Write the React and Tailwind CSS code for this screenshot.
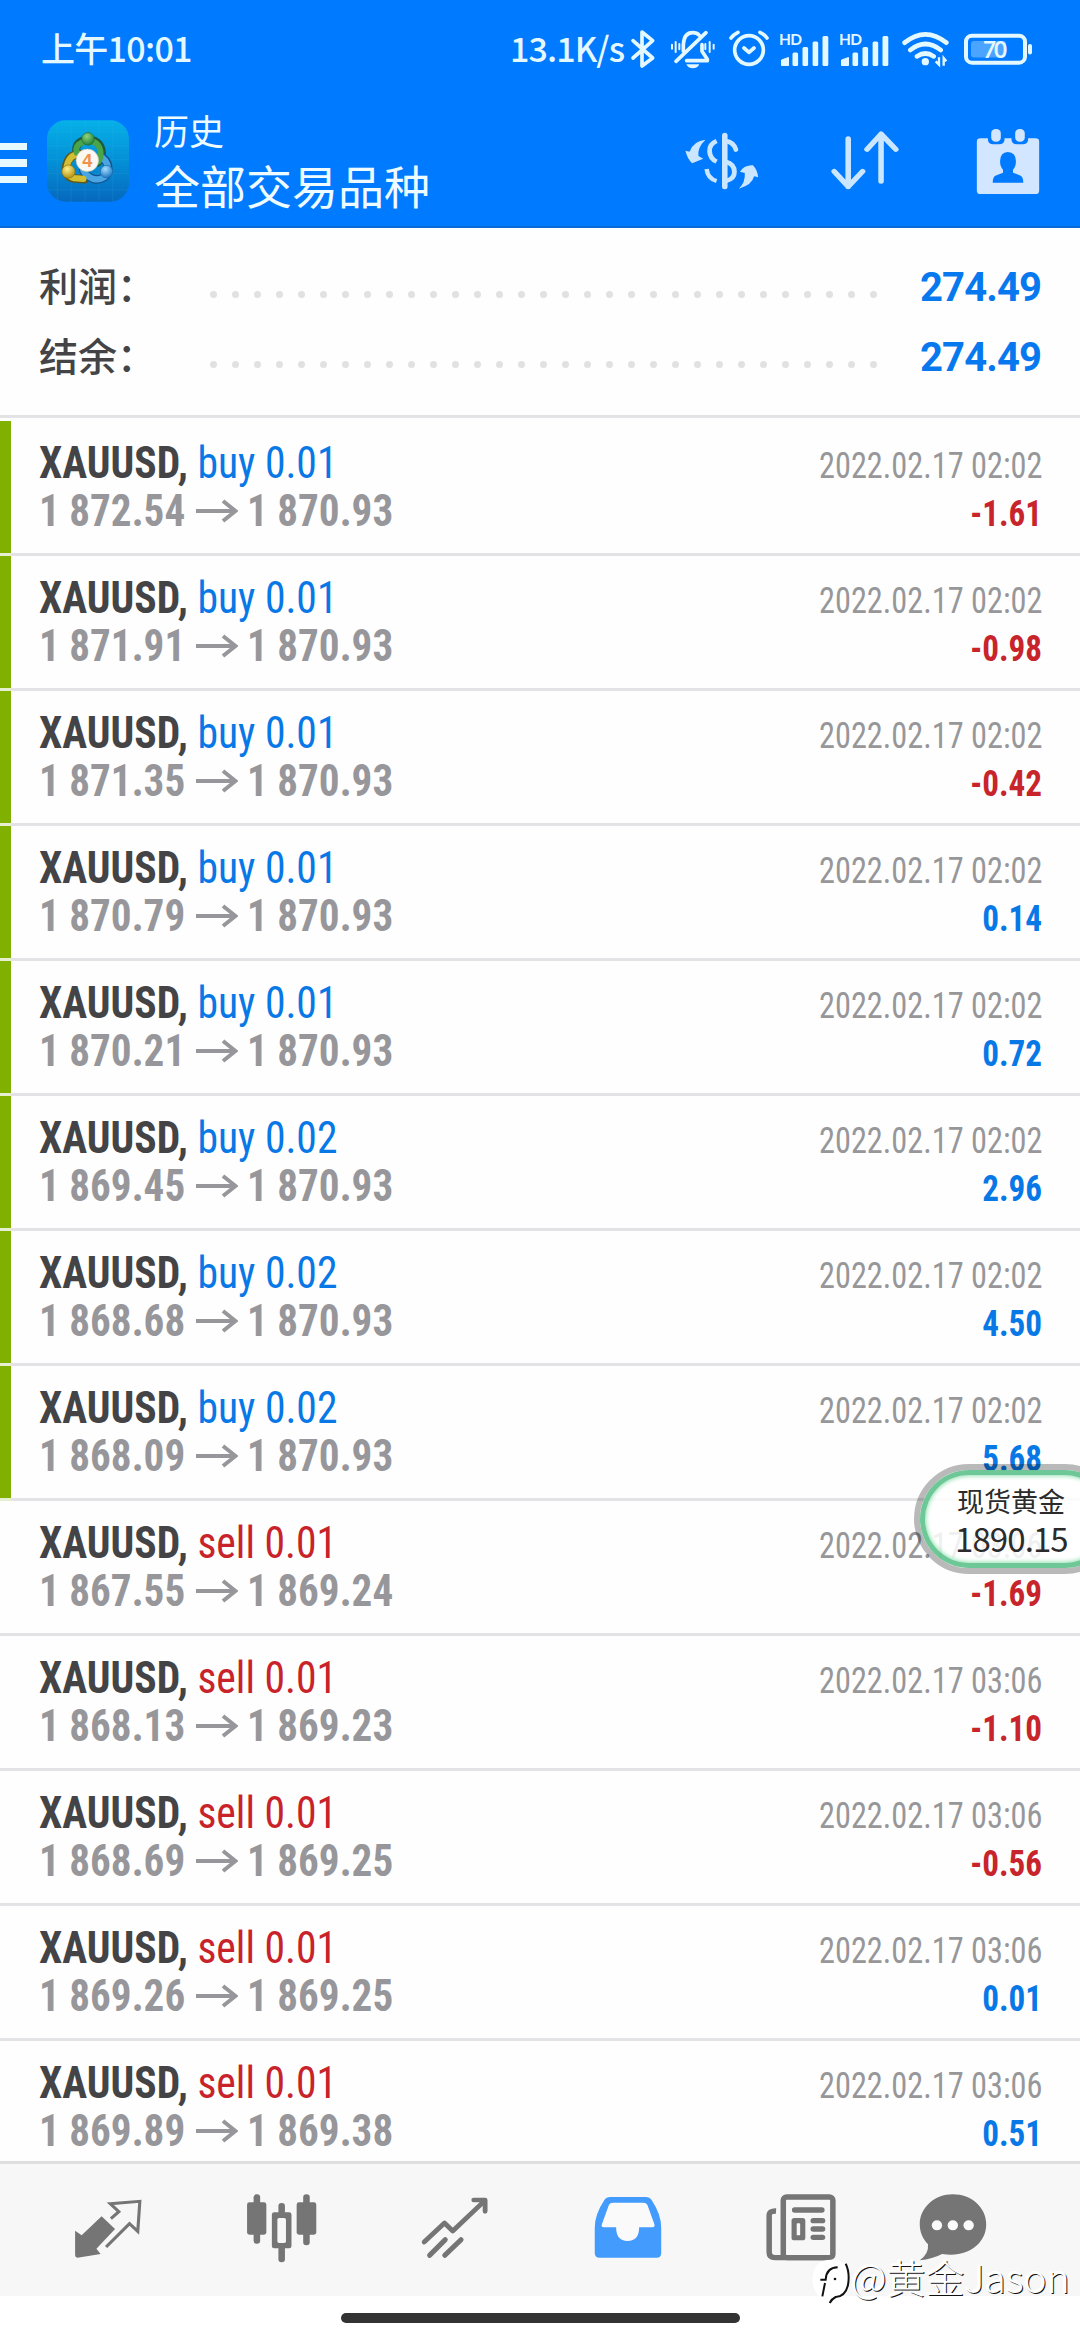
import React from "react";

const SUMMARY = [
  { label: "利润：", value: "274.49" },
  { label: "结余：", value: "274.49" },
];

const DEALS = [
  ["buy", "0.01", "1 872.54", "1 870.93", "2022.02.17 02:02", "-1.61"],
  ["buy", "0.01", "1 871.91", "1 870.93", "2022.02.17 02:02", "-0.98"],
  ["buy", "0.01", "1 871.35", "1 870.93", "2022.02.17 02:02", "-0.42"],
  ["buy", "0.01", "1 870.79", "1 870.93", "2022.02.17 02:02", "0.14"],
  ["buy", "0.01", "1 870.21", "1 870.93", "2022.02.17 02:02", "0.72"],
  ["buy", "0.02", "1 869.45", "1 870.93", "2022.02.17 02:02", "2.96"],
  ["buy", "0.02", "1 868.68", "1 870.93", "2022.02.17 02:02", "4.50"],
  ["buy", "0.02", "1 868.09", "1 870.93", "2022.02.17 02:02", "5.68"],
  ["sell", "0.01", "1 867.55", "1 869.24", "2022.02.17 03:06", "-1.69"],
  ["sell", "0.01", "1 868.13", "1 869.23", "2022.02.17 03:06", "-1.10"],
  ["sell", "0.01", "1 868.69", "1 869.25", "2022.02.17 03:06", "-0.56"],
  ["sell", "0.01", "1 869.26", "1 869.25", "2022.02.17 03:06", "0.01"],
  ["sell", "0.01", "1 869.89", "1 869.38", "2022.02.17 03:06", "0.51"],
];

function Signal({ className }) {
  return (
    <svg className={className} width="52" height="34" viewBox="0 0 52 34" fill="currentColor">
      <text x="0" y="13" fontSize="15.5" fontWeight="700" fontFamily="Lato, sans-serif" textLength="23">HD</text>
      <path d="M2.5 33.5 V28 L9.5 25.5 V33.5 Z" stroke="currentColor" strokeWidth="1" strokeLinejoin="round" />
      <rect x="13.5" y="20.5" width="5.6" height="13.5" rx="1.5" />
      <rect x="23.5" y="15" width="5.6" height="19" rx="1.5" />
      <rect x="33.6" y="9.5" width="5.6" height="24.5" rx="1.5" />
      <rect x="43.5" y="4" width="5.8" height="30" rx="1.5" />
    </svg>
  );
}

function StatusBar() {
  return (
    <div className="flex h-[97px] shrink-0 items-center pl-[41px] text-[#e4f8ff] font-['Noto_Sans_CJK_SC',sans-serif]">
      <span className="w-[469px] whitespace-nowrap pb-[2px] text-[34px] font-medium leading-none tracking-[-0.7px]">上午10:01</span>
      <span className="w-[120px] whitespace-nowrap pb-[2px] text-[34px] font-medium leading-none tracking-[-0.9px]">13.1K/s</span>
      {/* bluetooth */}
      <svg width="26" height="42" viewBox="30 20 78 126" fill="none" stroke="currentColor" strokeWidth="11" strokeLinejoin="round" strokeLinecap="round">
        <path d="M39 58 L98 110 L66 134 V32 L98 58 L39 110" />
      </svg>
      {/* muted bell */}
      <svg className="ml-[13px]" width="48" height="42" viewBox="147 22 144 126" fill="none" stroke="currentColor" strokeLinecap="round">
        <g strokeWidth="11" strokeLinejoin="round">
          <path d="M168 122 L258 36" />
          <path d="M190 92 V72 Q192 36 218 36 Q231 36 238 44" />
          <path d="M246 72 V92 L262 116 V120 H200" />
        </g>
        <g strokeWidth="6">
          <path d="M156 72 V84 M167 64 V94 M178 70 V86 M256 70 V86 M269 64 V94 M281 72 V84" />
        </g>
        <path d="M199 131 H238 Q233 143 218.500 143 Q204 143 199 131 Z" fill="currentColor" stroke="none" />
      </svg>
      {/* alarm */}
      <svg className="ml-[11px]" width="42" height="42" viewBox="326 22 126 126" fill="none" stroke="currentColor" strokeWidth="11" strokeLinecap="round" strokeLinejoin="round">
        <circle cx="389" cy="88" r="43" />
        <path d="M374 82 L389 95 L404 82 M335 52 Q342 42 356 35 M443 52 Q436 42 422 35" />
      </svg>
      <Signal className="ml-[9px]" />
      <Signal className="ml-[8px]" />
      {/* wifi */}
      <svg className="ml-[10px]" width="50" height="38" viewBox="214 30 150 114" fill="none" stroke="currentColor" strokeWidth="14" strokeLinecap="round">
        <path d="M225 68 Q287 18 350 68 M242 90 Q287 54 333 90 M262 109 Q287 92 312 109" />
        <circle cx="287" cy="125" r="11" fill="currentColor" stroke="none" />
        <path d="M318 124 L328 134 V112 M342 137 V114 L350 124" strokeWidth="7" strokeLinecap="butt" />
      </svg>
      {/* battery */}
      <svg className="ml-[12px]" width="72" height="34" viewBox="0 0 72 34">
        <rect x="3" y="3.700" width="59" height="27" rx="6" fill="none" stroke="currentColor" strokeWidth="4" />
        <rect x="8" y="9" width="35" height="16.500" rx="3" fill="#4ba4ff" />
        <rect x="65" y="12" width="4" height="10.500" rx="2" fill="currentColor" />
        <text x="32" y="25.500" textAnchor="middle" fontSize="22.500" fontWeight="700" fontFamily="Lato, sans-serif" fill="currentColor" textLength="24">70</text>
      </svg>
    </div>
  );
}

function AppLogo() {
  return (
    <svg className="ml-[20px] shrink-0" width="82" height="82" viewBox="22 28 248 246">
      <defs>
        <linearGradient id="tile" x1="0" y1="0" x2="0" y2="1">
          <stop offset="0" stopColor="#06b0e8" />
          <stop offset="0.5" stopColor="#0490d6" />
          <stop offset="1" stopColor="#0668bd" />
        </linearGradient>
        <radialGradient id="green" cx="0.4" cy="0.3" r="0.7">
          <stop offset="0" stopColor="#8fd47f" />
          <stop offset="1" stopColor="#23823a" />
        </radialGradient>
        <radialGradient id="gold" cx="0.4" cy="0.3" r="0.7">
          <stop offset="0" stopColor="#fff08a" />
          <stop offset="1" stopColor="#b39312" />
        </radialGradient>
        <radialGradient id="azure" cx="0.4" cy="0.3" r="0.7">
          <stop offset="0" stopColor="#a5dcff" />
          <stop offset="1" stopColor="#1c78c4" />
        </radialGradient>
      </defs>
      <rect x="22" y="28" width="248" height="246" rx="56" fill="url(#tile)" />
      <path d="M53 30 V272 M95 28 V274 M137 28 V274 M179 28 V274 M221 28 V274 M24 63 H268 M22 105 H270 M22 147 H270 M22 189 H270 M24 238 H268" stroke="#49c4f2" strokeWidth="1.500" opacity="0.25" />
      <g fill="none" strokeLinecap="round">
        <path d="M112 128 Q102 92 146 86 Q192 88 188 140 L176 156" stroke="#1c5c3c" strokeWidth="24" />
        <path d="M122 130 Q88 130 80 166 Q76 198 104 204 L136 206" stroke="#5c5a20" strokeWidth="26" />
        <path d="M188 140 Q212 156 206 186 Q194 210 164 206 Q140 198 132 180" stroke="#12538f" strokeWidth="26" />
        <path d="M132 180 Q140 198 164 206 Q194 210 206 186 Q210 158 190 142" stroke="#4aa6e2" strokeWidth="19" />
        <path d="M122 130 Q90 130 82 166 Q78 196 104 203 L132 205" stroke="#d2be30" strokeWidth="19" />
        <path d="M112 126 Q104 96 146 90 Q188 92 184 140 L178 152" stroke="#4aa54a" strokeWidth="18" />
      </g>
      <circle cx="146" cy="84" r="19" fill="url(#green)" stroke="#1c6b38" strokeWidth="2" />
      <circle cx="87" cy="183" r="20" fill="url(#gold)" stroke="#8a7a1a" strokeWidth="2" />
      <circle cx="202" cy="183" r="19" fill="url(#azure)" stroke="#1a66a8" strokeWidth="2" />
      <circle cx="144" cy="149" r="34" fill="#fbf8f4" stroke="#c9c5b0" strokeWidth="2" />
      <text x="144" y="168" textAnchor="middle" fontSize="55" fontWeight="700" fontFamily="'Liberation Sans', sans-serif" fill="#f0924a">4</text>
    </svg>
  );
}

function Header() {
  return (
    <div className="flex flex-1 items-center border-b-2 border-[#0a6ad6] pb-px">
      <div className="flex w-[27px] flex-col gap-[9px] pt-1">
        <div className="h-[7.500px] bg-[#e6f9ff]" />
        <div className="h-[7.500px] bg-[#e6f9ff]" />
        <div className="h-[7.500px] bg-[#e6f9ff]" />
      </div>
      <AppLogo />
      <div className="ml-[25px] flex w-[501px] flex-col whitespace-nowrap pb-[3px] text-[#eefbff]">
        <span className="text-[35px] leading-[49px]">历史</span>
        <span className="text-[46px] leading-[61px]">全部交易品种</span>
      </div>
      {/* currency exchange */}
      <svg className="ml-[29px]" width="76" height="62" viewBox="498 388 205 186" preserveAspectRatio="none" fill="none" stroke="#cbe6ff" strokeWidth="13">
        <path d="M608 404 V558" strokeWidth="15" strokeLinecap="round" />
        <path d="M586 421 Q566 430 567 452 Q568 474 586 483" />
        <path d="M610 421 Q632 424 638 447" strokeLinecap="round" />
        <path d="M610 483 Q634 490 634 514 Q634 534 612 541" />
        <path d="M559 505 Q562 534 586 541" strokeWidth="12" />
        <path d="M556 417 Q524 420 513 453 L502 450 Q506 472 520 488 L550 474 L537 466 Q534 440 556 417 Z" fill="#cbe6ff" stroke="none" />
        <path d="M646 564 Q664 545 662 517 L649 513 Q662 492 684 494 Q696 508 698 530 L687 527 Q682 553 646 564 Z" fill="#cbe6ff" stroke="none" />
      </svg>
      {/* sort */}
      <svg className="ml-[69px]" width="72" height="66" viewBox="890 388 195 198" preserveAspectRatio="none" fill="none" stroke="#cbe6ff" strokeWidth="15" strokeLinecap="round" strokeLinejoin="round">
        <path d="M942 420 V564 M904 518 L942 564 L981 518 M1031 548 V406 M993 452 L1031 406 L1071 452" />
      </svg>
      {/* calendar */}
      <svg className="ml-[74px]" width="66" height="68" viewBox="1284 380 179 204" preserveAspectRatio="none">
        <rect x="1289" y="414" width="169" height="167" rx="10" fill="#d2e6ff" />
        <path d="M1319 408 H1364 V420 Q1362 432 1350 432 H1333 Q1321 432 1319 420 Z M1383 408 H1428 V420 Q1426 432 1414 432 H1397 Q1385 432 1383 420 Z" fill="#007aff" />
        <rect x="1328" y="386" width="26" height="38" rx="12" fill="#d2e6ff" />
        <rect x="1393" y="386" width="26" height="38" rx="12" fill="#d2e6ff" />
        <path d="M1373 455 Q1395 457 1395 482 Q1395 500 1387 508 V517 L1408 526 Q1415 531 1415 547 H1332 Q1332 531 1339 526 L1360 517 V508 Q1352 500 1352 482 Q1352 457 1373 455 Z" fill="#007aff" />
      </svg>
    </div>
  );
}

function Summary() {
  return (
    <div className="flex h-[190px] shrink-0 flex-col border-b-[3px] border-[#e3e3e5] pt-[23px]">
      {SUMMARY.map((s) => (
        <div key={s.label} className="flex h-[70px] items-center pl-[39px] pr-[39px]">
          <span className="w-[171px] whitespace-nowrap pb-[4px] text-[39px] font-medium leading-none text-[#444446]">{s.label}</span>
          <div className="mt-[16px] flex w-[667px] justify-between">
            {Array.from({ length: 31 }, (_, i) => (
              <span key={i} className="size-[7px] rounded-full bg-[#e1e1e2]" />
            ))}
          </div>
          <span className="ml-auto pt-[3px] font-['Roboto'] text-[40px] font-bold leading-none tracking-[-0.9px] text-[#0878ee]">{s.value}</span>
        </div>
      ))}
    </div>
  );
}

function Deal({ deal }) {
  const [side, lots, open, close, time, profit] = deal;
  const isBuy = side === "buy";
  const isLoss = profit.startsWith("-");
  return (
    <div className="flex h-[135px] shrink-0 flex-col font-['Roboto_Condensed','Roboto',sans-serif]">
      <div className="flex h-[132px]">
        <div className={isBuy ? "w-[11px] bg-[#80b000]" : "w-[11px]"} />
        <div className="flex-1 pl-[28px] pr-[38px] pt-[18px]">
          <div className="flex h-[48px] items-baseline justify-between whitespace-nowrap text-[44px] leading-[48px]">
            <span className="origin-left scale-x-[0.945]">
              <b className="font-bold text-[#444446]">XAUUSD,</b>{" "}
              <span className={isBuy ? "text-[#0878e6]" : "text-[#c8232a]"}>{side} {lots}</span>
            </span>
            <span className="origin-right scale-x-[0.885] text-[36.500px] text-[#97979a]">{time}</span>
          </div>
          <div className="flex h-[48px] items-baseline whitespace-nowrap text-[44px] font-bold leading-[48px] text-[#97979b]">
            <span className="w-[157px]"><span className="inline-block origin-left scale-x-[0.935]">{open}</span></span>
            <svg className="w-[42px] self-center" height="24" viewBox="0 0 42 24" fill="none" stroke="currentColor" strokeWidth="4">
              <path d="M0 12 H39 M27 2 L39.500 12 L27 22" />
            </svg>
            <span className="ml-[9px] inline-block origin-left scale-x-[0.935]">{close}</span>
            <span className={isLoss ? "ml-auto origin-right scale-x-[0.92] text-[36px] text-[#c8242b]" : "ml-auto origin-right scale-x-[0.92] text-[36px] text-[#0878e6]"}>{profit}</span>
          </div>
        </div>
      </div>
      <div className="flex h-[3px] bg-[#e3e3e5]">
        {isBuy && <div className="w-[11px] bg-[#e6efcf]" />}
      </div>
    </div>
  );
}

function NavIcon({ x, w, className, children }) {
  return (
    <svg className={className} width={w / 2.904} height="71.7" viewBox={`${x} 155 ${w} 215`} preserveAspectRatio="none">
      {children}
    </svg>
  );
}

function BottomNav() {
  return (
    <div className="flex h-[135px] shrink-0 items-start border-t-[3px] border-[#dededf] bg-[#f7f7f7] pt-[28px] text-[#757575]">
      <NavIcon x={210} w={210} className="ml-[72.3px]">
        <path d="M219 271 L238 285 L296 228 L335 266 L281 325 L293 341 L226 352 Q219 352 219 345 Z" fill="currentColor" />
        <path d="M323 235 L346 214 L321 190 L407 183 L401 273 L377 250 L309 320" fill="none" stroke="currentColor" strokeWidth="9" />
      </NavIcon>
      <NavIcon x={710} w={215} className="ml-[100.2px]">
        <g fill="currentColor">
          <rect x="716" y="186" width="56" height="97" rx="7" />
          <rect x="735" y="162" width="19" height="148" rx="9" />
          <rect x="860" y="186" width="57" height="97" rx="7" />
          <rect x="879" y="162" width="19" height="153" rx="9" />
          <rect x="788" y="216" width="57" height="108" rx="7" />
          <rect x="807" y="188" width="19" height="178" rx="9" />
        </g>
        <rect x="804" y="233" width="25" height="75" rx="5" fill="#f7f7f7" />
      </NavIcon>
      <NavIcon x={1215} w={210} className="ml-[99.9px]">
        <path d="M1230 305 L1289 248 L1313 272 L1406 181 M1374 179 H1407 V213" fill="none" stroke="currentColor" strokeWidth="14" strokeLinecap="round" strokeLinejoin="round" />
        <path d="M1246 345 L1291 298 M1290 345 L1337 298" stroke="currentColor" strokeWidth="15" strokeLinecap="round" />
      </NavIcon>
      <NavIcon x={150} w={210} className="ml-[101px]">
        <path d="M203 170 H306 Q318 170 323 179 Q351 222 351 262 V338 Q351 352 338 352 H172 Q158 352 158 338 V262 Q158 222 186 179 Q191 170 203 170 Z" fill="#429bfd" />
        <path d="M211 187 H299 Q308 187 311 194 L331 251 Q334 261 325 261 H287 Q287 302 253 302 Q220 302 220 261 H185 Q175 261 179 251 L199 194 Q202 187 211 187 Z" fill="#fafafa" />
      </NavIcon>
      <NavIcon x={650} w={215} className="ml-[99.8px]">
        <rect x="706" y="170" width="144" height="182" rx="10" fill="#f7f7f7" stroke="currentColor" strokeWidth="16" />
        <path d="M685 212 Q665 211 665 226 V335 Q665 352 682 352 H830" fill="none" stroke="currentColor" strokeWidth="16" />
        <path d="M739 209 H818 M793 241 H820 M793 266 H820 M793 291 H820" stroke="currentColor" strokeWidth="16" strokeLinecap="round" />
        <rect x="730" y="233" width="40" height="67" rx="8" fill="currentColor" />
        <rect x="745" y="249" width="10" height="36" rx="2" fill="#f7f7f7" />
      </NavIcon>
      <NavIcon x={1095} w={210} className="ml-[79.1px]">
        <path d="M1199 162 C1254 162 1296 202 1296 252 C1296 310 1242 354 1168 341 Q1140 356 1103 360 Q1130 340 1127 312 C1112 296 1103 276 1103 252 C1103 202 1146 162 1199 162 Z" fill="currentColor" />
        <circle cx="1153" cy="255" r="15" fill="#fafafa" />
        <circle cx="1199" cy="255" r="15" fill="#fafafa" />
        <circle cx="1245" cy="255" r="15" fill="#fafafa" />
      </NavIcon>
    </div>
  );
}

function FloatingQuote() {
  return (
    <div className="absolute left-[914px] top-[1464px] h-[110px] w-[206px] rounded-full border-[6px] border-[#00000045]">
      <div className="flex h-full flex-col rounded-full border-[5px] border-[#3fb573c0] bg-white/85 pl-[32px] pt-[6px] text-[#2b2b2b] shadow-[inset_0_0_4px_1px_#8fe0b0]">
        <span className="whitespace-nowrap text-[27px] leading-[39px]">现货黄金</span>
        <span className="-ml-[2px] whitespace-nowrap text-[33px] leading-[36px] tracking-[-0.9px]">1890.15</span>
      </div>
    </div>
  );
}

function Watermark() {
  return (
    <div className="absolute left-[811px] top-[2251px] flex items-start">
      <svg className="mt-[7px]" width="43" height="50" viewBox="30 235 129 150">
        <path d="M92 240 Q148 240 148 300 Q146 352 92 372 Q34 350 34 300 Q36 240 92 240 Z" fill="#fff" />
        <path d="M58 300 H74 Q76 264 110 263 M72 310 L64 350 M134 252 Q146 275 142 310 Q136 350 104 352 Q92 358 86 370" fill="none" stroke="#111" strokeWidth="6" />
        <circle cx="102" cy="298" r="4" fill="#111" />
      </svg>
      <span className="-ml-[3px] whitespace-nowrap text-[39px] font-light leading-[50px] text-white [text-shadow:1px_1px_0_#111,-1px_-1px_0_#fff]">@黄金Jason</span>
    </div>
  );
}

export default function App() {
  return (
    <div className="relative flex h-[2340px] w-[1080px] flex-col overflow-hidden bg-[#fefefe] font-['Noto_Sans_CJK_SC',sans-serif]">
      <div className="flex h-[228px] shrink-0 flex-col bg-[#007aff]">
        <StatusBar />
        <Header />
      </div>
      <Summary />
      <div className="flex min-h-0 flex-1 flex-col overflow-hidden pt-[3px]">
        {DEALS.map((d) => (
          <Deal key={d[2]} deal={d} />
        ))}
      </div>
      <BottomNav />
      <div className="flex h-[44px] shrink-0 justify-center bg-white pt-[17px]">
        <div className="h-[10px] w-[399px] rounded-full bg-[#333]" />
      </div>
      <FloatingQuote />
      <Watermark />
    </div>
  );
}
